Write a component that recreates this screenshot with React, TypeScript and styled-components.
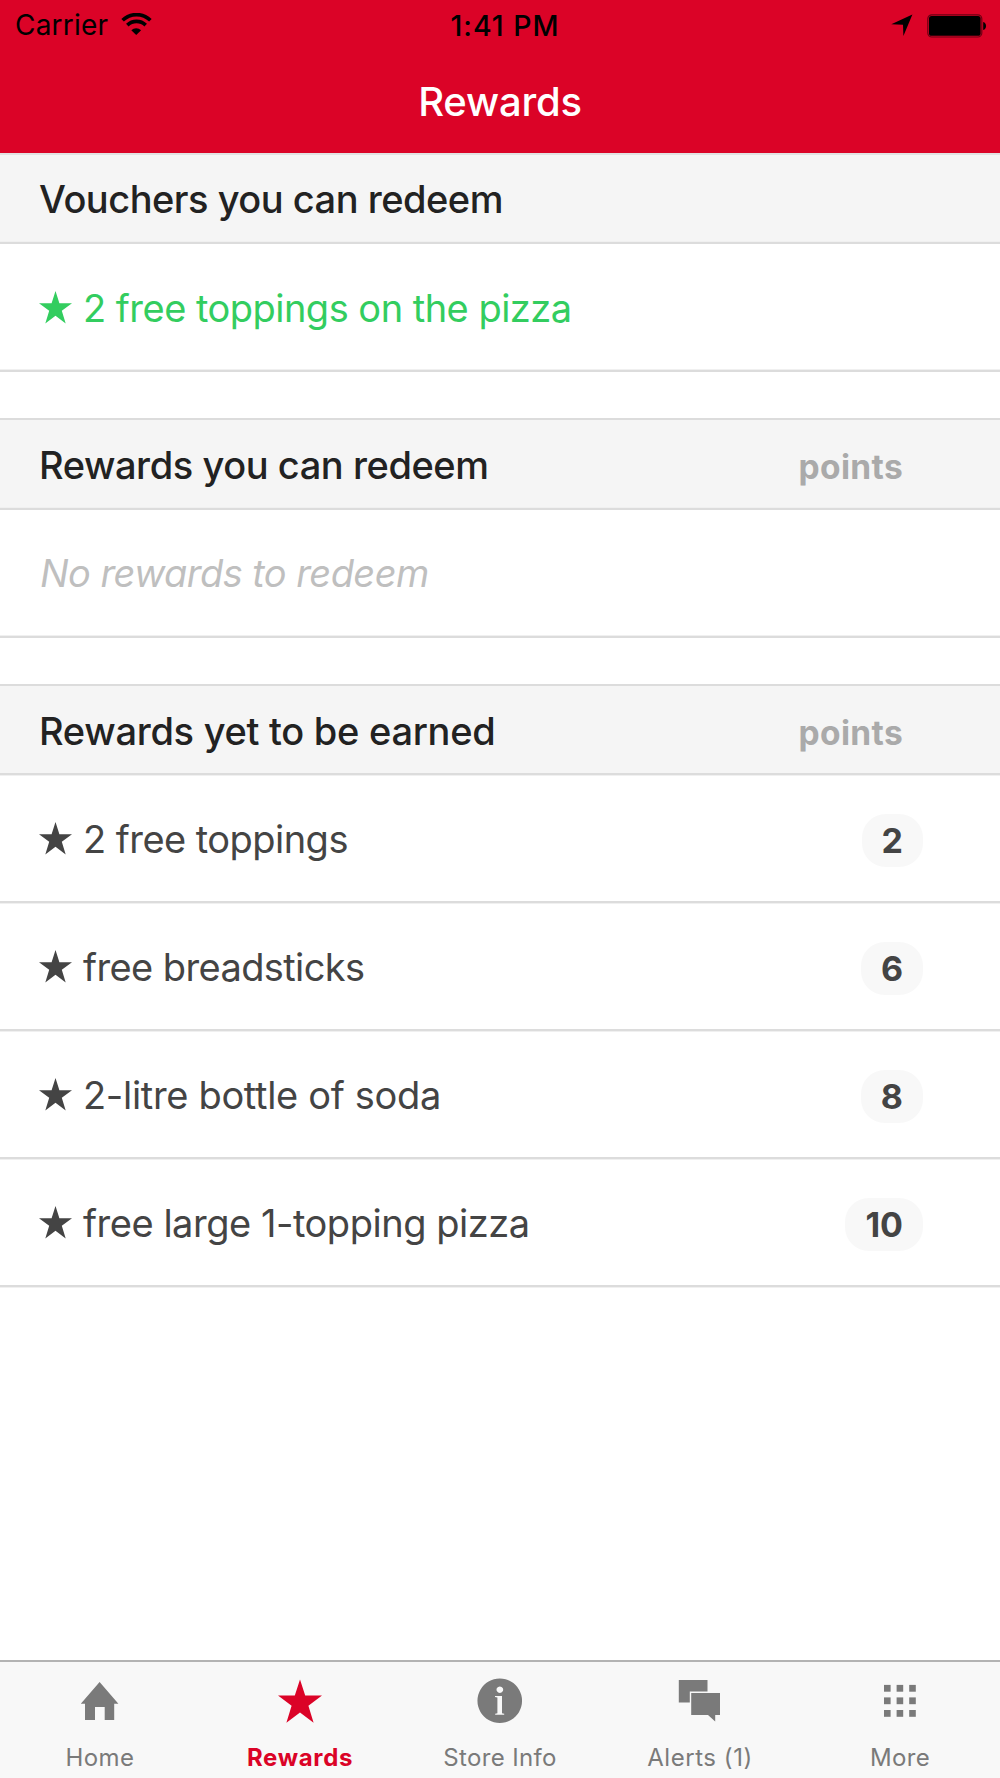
import React from "react";
import styled, { createGlobalStyle } from "styled-components";

const RED = "#db0327";
const LINE = "#dcdcdc";
const SOFT_LINE = "#f0f0f0";

type Edge = "above" | "below";

const softEdge = (edge?: Edge) =>
  edge === "below" ? `0 1px 0 ${SOFT_LINE}` : `inset 0 -1px 0 ${SOFT_LINE}`;

const GlobalStyle = createGlobalStyle`
  *, *::before, *::after { box-sizing: border-box; }
  html, body { margin: 0; padding: 0; background: #fff; }
  body { font-family: Inter, "Liberation Sans", sans-serif; font-kerning: normal; -webkit-font-smoothing: antialiased; }
`;

const Screen = styled.div`
  display: flex;
  flex-direction: column;
  width: 1000px;
  height: 1778px;
  background: #fff;
  overflow: hidden;
`;

const TopBar = styled.header`
  flex: none;
  height: 153px;
  background: ${RED};
`;

const StatusBar = styled.div`
  display: grid;
  grid-template-columns: 1fr auto 1fr;
  align-items: center;
  height: 51px;
  padding: 0 13px 0 15px;
  font-size: 28px;
  line-height: 51px;
  color: #000;
`;

const Carrier = styled.div`
  display: flex;
  align-items: center;
  gap: 12.5px;
  letter-spacing: 0.2px;
`;

const Clock = styled.div`
  padding-left: 8px;
  font-size: 28.5px;
  font-weight: 500;
  letter-spacing: 1px;
`;

const StatusIcons = styled.div`
  display: flex;
  justify-content: flex-end;
  align-items: center;
  gap: 14px;
`;

const Title = styled.h1`
  margin: 0;
  height: 102px;
  line-height: 101px;
  font-size: 40px;
  font-weight: 500;
  letter-spacing: -0.2px;
  text-align: center;
  color: #fff;
`;

const Content = styled.main`
  flex: 1;
  min-height: 0;
`;

const Section = styled.section`
  margin-bottom: 45.9px;
`;

const SectionHeader = styled.div<{ $first?: boolean; $edge?: Edge }>`
  display: flex;
  justify-content: space-between;
  align-items: center;
  height: ${(p) => (p.$first ? 91 : 91.8)}px;
  padding: ${(p) => (p.$first ? 1 : 2)}px 97px 0 39px;
  background: #f5f5f5;
  border-top: 2px solid ${(p) => (p.$first ? "#e2e2e2" : LINE)};
  border-bottom: 2px solid ${LINE};
  box-shadow: ${(p) => softEdge(p.$edge)};
`;

const SectionTitle = styled.h2<{ $tracking?: number }>`
  margin: 0;
  font-size: 38px;
  font-weight: 500;
  line-height: 48px;
  letter-spacing: ${(p) => p.$tracking ?? 0}px;
  color: #222;
`;

const PointsLabel = styled.span`
  padding-top: 4px;
  font-size: 33.5px;
  font-weight: 700;
  line-height: 48px;
  letter-spacing: 0.35px;
  color: #aaa;
`;

const Row = styled.div<{ $color?: string; $edge?: Edge }>`
  display: flex;
  align-items: center;
  height: 128.03px;
  padding: 1px 77px 0 39px;
  border-bottom: 2px solid ${LINE};
  box-shadow: ${(p) => softEdge(p.$edge)};
  color: ${(p) => p.$color ?? "#444"};
`;

const RowLabel = styled.span<{ $tracking?: number }>`
  flex: 1;
  margin-left: 11px;
  font-size: 38px;
  line-height: 48px;
  letter-spacing: ${(p) => p.$tracking ?? 0}px;
`;

const EmptyLabel = styled.span`
  margin-left: 1px;
  font-size: 38px;
  font-style: italic;
  line-height: 48px;
  letter-spacing: -0.56px;
  color: #bfbfbf;
`;

const Badge = styled.span`
  height: 53px;
  margin-top: 4px;
  padding: 0 20px;
  border-radius: 24px;
  background: #f8f8f8;
  font-size: 34px;
  font-weight: 700;
  line-height: 54px;
`;

const TabBar = styled.nav`
  flex: none;
  display: grid;
  grid-template-columns: repeat(5, 1fr);
  height: 118px;
  border-top: 2px solid #b3b3b3;
  background: #f8f8f8;
`;

const Tab = styled.a<{ $active?: boolean }>`
  display: flex;
  flex-direction: column;
  align-items: center;
  color: ${(p) => (p.$active ? RED : "#7a7a7a")};
  font-weight: ${(p) => (p.$active ? 700 : 400)};
`;

const TabIcon = styled.svg`
  display: block;
  width: 60px;
  height: 60px;
  margin-top: 9px;
  fill: currentColor;
`;

const TabLabel = styled.span<{ $tracking: number }>`
  margin-top: 9px;
  font-size: 24px;
  line-height: 36px;
  letter-spacing: ${(p) => p.$tracking}px;
  white-space: nowrap;
`;

const StarMark = styled.svg`
  flex: none;
  width: 33px;
  height: 33px;
  margin-top: -1px;
  fill: currentColor;
`;

const WifiMark = styled.svg`
  display: block;
  margin-top: -2px;
`;

const STAR =
  "M22 0 L27.2 16.2 L44 16.2 L30.4 26.4 L35.6 43.4 L22 33 L8.4 43.4 L13.6 26.4 L0 16.2 L16.8 16.2 Z";

const Star = () => (
  <StarMark viewBox="0 0 44 44">
    <path d={STAR} />
  </StarMark>
);

const Wifi = () => (
  <WifiMark width="31" height="23" viewBox="0 0 31 23">
    <g fill="none" stroke="#000" strokeWidth="3.6">
      <path d="M1.6 7.2 A20 20 0 0 1 29.4 7.2" />
      <path d="M6.3 12.1 A13.2 13.2 0 0 1 24.7 12.1" />
    </g>
    <path d="M10.3 17.2 A7.4 7.4 0 0 1 20.1 17.2 L15.2 22.1 Z" />
  </WifiMark>
);

const Location = () => (
  <svg width="22" height="23" viewBox="0 0 22 23">
    <path d="M21.4 0.6 L12.4 22 L12 10.8 L0.3 10.2 Z" />
  </svg>
);

const Battery = () => (
  <svg width="60" height="24" viewBox="0 0 60 24">
    <rect x="0.8" y="0.8" width="54" height="22.2" rx="4" fill="none" stroke="#6d0013" strokeWidth="1.2" />
    <rect x="2" y="2" width="51.6" height="19.8" rx="2.6" />
    <path d="M56.2 8 C60 8.6 60 15.4 56.2 16 Z" />
  </svg>
);

const icons = {
  home: <path d="M29.6 11 L48.4 32.8 H44.2 V49 H34.7 V36 H25 V49 H15 V32.8 H10.8 Z" />,
  star: <path transform="translate(8 8.4)" d={STAR} />,
  info: (
    <path
      fillRule="evenodd"
      d="M29.8 7.5 A22.3 22.3 0 1 1 29.7 7.5 Z M29.8 15.4 A3.3 3.3 0 1 0 29.9 15.4 Z M25 25 H32 V42.3 L34.2 42.8 V43.8 H25.2 V42.8 L27.4 42.3 V26.5 L25 26 Z"
    />
  ),
  alerts: (
    <>
      <path d="M8.8 9 H37.5 V20.4 H19.8 V31.4 H8.8 Z" />
      <path d="M21.2 21.9 H50 V43.9 H45.2 V50.4 L38 43.9 H21.2 Z" />
    </>
  ),
  more: (
    <>
      {[13.9, 26.4, 39].map((y) =>
        [14, 26.6, 39.2].map((x) => <rect key={`${x}-${y}`} x={x} y={y} width="6.6" height="6.8" />)
      )}
    </>
  ),
};

const rewards = [
  { label: "2 free toppings", points: 2, tracking: -0.54 },
  { label: "free breadsticks", points: 6, tracking: -0.6 },
  { label: "2-litre bottle of soda", points: 8, tracking: -0.32 },
  { label: "free large 1-topping pizza", points: 10, tracking: -0.47 },
];

const tabs = [
  { label: "Home", icon: icons.home, tracking: 0.4 },
  { label: "Rewards", icon: icons.star, tracking: 0.65, active: true },
  { label: "Store Info", icon: icons.info, tracking: 0.35 },
  { label: "Alerts (1)", icon: icons.alerts, tracking: 0.55 },
  { label: "More", icon: icons.more, tracking: 0.3 },
];

export default function App() {
  return (
    <Screen>
      <GlobalStyle />
      <TopBar>
        <StatusBar>
          <Carrier>
            <span>Carrier</span>
            <Wifi />
          </Carrier>
          <Clock>1:41 PM</Clock>
          <StatusIcons>
            <Location />
            <Battery />
          </StatusIcons>
        </StatusBar>
        <Title>Rewards</Title>
      </TopBar>
      <Content>
        <Section>
          <SectionHeader $first>
            <SectionTitle $tracking={-0.49}>Vouchers you can redeem</SectionTitle>
          </SectionHeader>
          <Row $color="#33cd5f">
            <Star />
            <RowLabel $tracking={-0.52}>2 free toppings on the pizza</RowLabel>
          </Row>
        </Section>
        <Section>
          <SectionHeader>
            <SectionTitle $tracking={-0.43}>Rewards you can redeem</SectionTitle>
            <PointsLabel>points</PointsLabel>
          </SectionHeader>
          <Row>
            <EmptyLabel>No rewards to redeem</EmptyLabel>
          </Row>
        </Section>
        <Section>
          <SectionHeader $edge="below">
            <SectionTitle $tracking={-0.28}>Rewards yet to be earned</SectionTitle>
            <PointsLabel>points</PointsLabel>
          </SectionHeader>
          {rewards.map((r) => (
            <Row key={r.label} $edge="below">
              <Star />
              <RowLabel $tracking={r.tracking}>{r.label}</RowLabel>
              <Badge>{r.points}</Badge>
            </Row>
          ))}
        </Section>
      </Content>
      <TabBar>
        {tabs.map((t) => (
          <Tab key={t.label} $active={t.active}>
            <TabIcon viewBox="0 0 60 60">{t.icon}</TabIcon>
            <TabLabel $tracking={t.tracking}>{t.label}</TabLabel>
          </Tab>
        ))}
      </TabBar>
    </Screen>
  );
}
